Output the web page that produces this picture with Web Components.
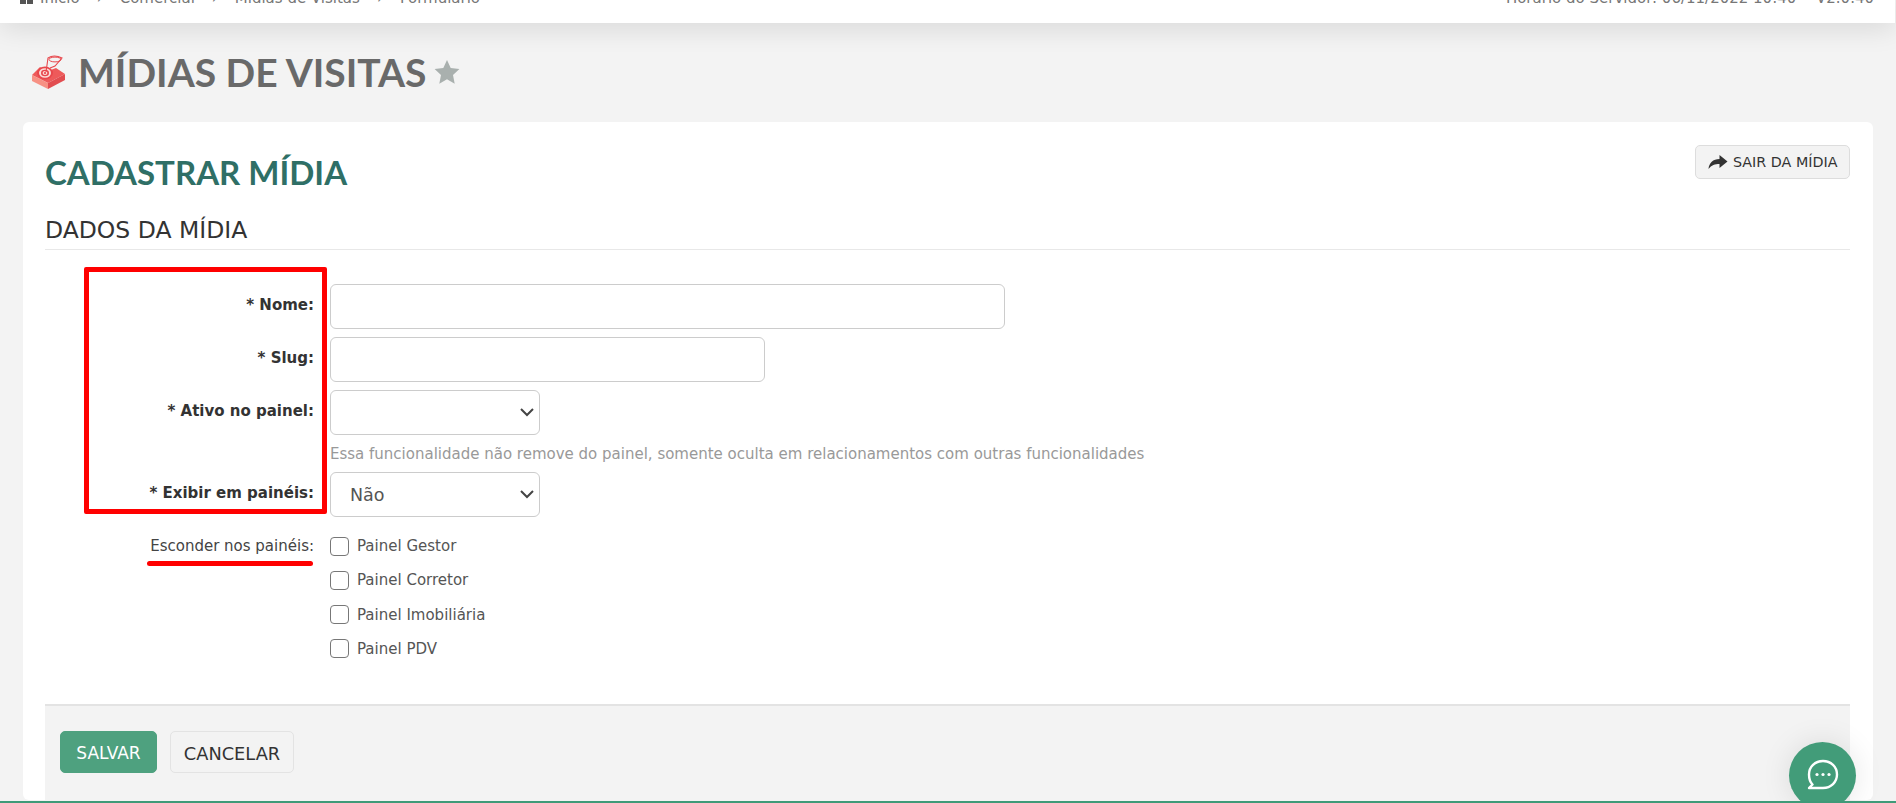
<!DOCTYPE html>
<html lang="pt-BR">
<head>
<meta charset="utf-8">
<title>Mídias de visitas</title>
<style>
  html, body { margin: 0; height: 100%; overflow: hidden; }
  body { background: #f3f3f3; font-family: "DejaVu Sans", sans-serif; }
</style>
</head>
<body>
<app-shell>
  <top-bar></top-bar>
  <page-title>MÍDIAS DE VISITAS</page-title>
  <form-card>
    <form-row label="* Nome:" strong><text-box width="675"></text-box></form-row>
    <form-row label="* Slug:" strong><text-box width="435"></text-box></form-row>
    <form-row label="* Ativo no painel:" strong hint="Essa funcionalidade não remove do painel, somente oculta em relacionamentos com outras funcionalidades"><select-box></select-box></form-row>
    <form-row label="* Exibir em painéis:" strong><select-box value="Não"></select-box></form-row>
    <form-row label="Esconder nos painéis:" plain>
      <check-list></check-list>
    </form-row>
  </form-card>
  <chat-button></chat-button>
</app-shell>

<script>
// componentes da tela de cadastro de mídia

class AppShell extends HTMLElement {
  constructor() {
    super();
    this.attachShadow({ mode: 'open' });
    this.shadowRoot.innerHTML = `
      <style>
        :host { display: flex; flex-direction: column; position: relative; height: 803px; overflow: hidden; }
        .linha { position: absolute; left: 0; right: 0; bottom: 0; height: 2px; background: #3f9a78; z-index: 5; }
      </style>
      <slot></slot>
      <div class="linha"></div>
    `;
  }
}

class TopBar extends HTMLElement {
  constructor() {
    super();
    this.attachShadow({ mode: 'open' });
    this.shadowRoot.innerHTML = `
      <style>
        :host {
          display: flex; flex: none; height: 23px; width: 1895px; background: #fff; overflow: hidden;
          justify-content: space-between; align-items: flex-end; padding: 0 21px 17px 20px; box-sizing: border-box;
          font: 15px/16px "DejaVu Sans", sans-serif; color: #777; position: relative; z-index: 2;
          box-shadow: 0 4px 28px rgba(0,0,0,.13);
        }
        .migalhas { display: flex; align-items: center; gap: 17px; }
        .migalhas svg { display: block; }
        .inicio { display: flex; align-items: center; gap: 7px; }
      </style>
      <div class="migalhas">
        <span class="inicio"><svg width="13" height="13" viewBox="0 0 13 13" fill="#555"><rect x="0" y="1" width="6" height="5"/><rect x="7" y="1" width="6" height="5"/><rect x="0" y="7" width="6" height="5"/><rect x="7" y="7" width="6" height="5"/></svg>Início</span>
        <span>›</span><span>Comercial</span><span>›</span><span>Mídias de Visitas</span><span>›</span><span>Formulário</span>
      </div>
      <div>Horário do Servidor: 06/11/2022 10:40 &nbsp;- V2.0.40</div>
    `;
  }
}

class PageTitle extends HTMLElement {
  constructor() {
    super();
    this.attachShadow({ mode: 'open' });
    this.shadowRoot.innerHTML = `
      <style>
        :host {
          display: flex; flex: none; align-items: center; height: 99px; box-sizing: border-box;
          padding: 0 0 2px 32px; gap: 12px;
          font: 700 39px/48px Lato, sans-serif; color: #696969;
        }
        .estrela { margin-left: -4px; }
        svg { display: block; }
      </style>
      <svg width="34" height="34" viewBox="0 0 34 34">
        <path d="M0 20 L8 12 L16 16 L24 13 L33 19 L16 28 Z" fill="#ee5a5a"/>
        <path d="M0 20 L16 28 V34 L0 26 Z" fill="#f79184"/>
        <path d="M16 28 L33 19 V25 L16 34 Z" fill="#e24d50"/>
        <ellipse cx="13" cy="18" rx="8" ry="6.500" fill="#e8474c"/>
        <ellipse cx="13" cy="18" rx="6" ry="4.800" fill="#fbdcd8"/>
        <ellipse cx="13" cy="18" rx="4" ry="3.200" fill="#e8474c"/>
        <ellipse cx="13" cy="18" rx="2.400" ry="1.900" fill="#fbdcd8"/>
        <circle cx="13" cy="18" r="1.100" fill="#e8474c"/>
        <path d="M14 17 L16 3 Q22 -1 30 3 L23 11 L18 13" fill="none" stroke="#e8474c" stroke-width="1.100"/>
        <ellipse cx="23" cy="4.500" rx="6" ry="2.400" fill="none" stroke="#e8474c" stroke-width="1"/>
      </svg>
      <span><slot></slot></span>
      <svg class="estrela" width="26" height="26" viewBox="0 0 26 26"><path d="M13 1 L16.7 9 L25.4 10 L19 16 L20.7 24.7 L13 20.3 L5.3 24.7 L7 16 L.6 10 L9.3 9 Z" fill="#a9b0ae"/></svg>
    `;
  }
}

class FormCard extends HTMLElement {
  constructor() {
    super();
    this.attachShadow({ mode: 'open' });
    this.shadowRoot.innerHTML = `
      <style>
        :host {
          display: block; position: relative; flex: none; width: 1850px; height: 678px; margin-left: 23px;
          background: #fff; border-radius: 6px; box-sizing: border-box; padding: 0 23px 0 22px;
        }
        header { display: flex; justify-content: space-between; align-items: flex-start; height: 84px; }
        h1 { margin: 30px 0 0; font: 700 33px/40px Lato, sans-serif; color: #2f6f66; }
        .sair {
          display: flex; align-items: center; gap: 5px; width: 155px; height: 34px; margin: 23px 0 0; padding: 0 0 0 12px;
          box-sizing: border-box; background: #f3f3f3; border: 1px solid #ddd; border-radius: 5px;
          font: 14.300px "DejaVu Sans", sans-serif; color: #333; white-space: nowrap;
        }
        h2 {
          margin: 0; height: 44px; box-sizing: border-box; border-bottom: 1px solid #e8e8e8;
          font: 400 23.500px/49px "DejaVu Sans", sans-serif; color: #333;
        }
        .linhas { display: flex; flex-direction: column; gap: 8px; padding-top: 34px; height: 454px; box-sizing: border-box; }
        footer {
          display: flex; gap: 13px; height: 96px; box-sizing: border-box; border-top: 2px solid #e3e3e3;
          background: #f3f3f3; padding: 25px 0 0 15px;
        }
        button {
          height: 42px; box-sizing: border-box; border-radius: 5px; padding: 2px 0 0; cursor: pointer;
          font: 17px "DejaVu Sans", sans-serif;
        }
        .salvar { width: 97px; background: #4ea17f; border: 1px solid #4ea17f; color: #fff; }
        .cancelar { width: 124px; background: #f3f3f3; border: 1px solid #e3e3e3; color: #333; font-size: 17.800px; }
        .marca { position: absolute; left: 61px; top: 145px; width: 243px; height: 247px; box-sizing: border-box; border: 5px solid #f00; border-radius: 2px; pointer-events: none; }
        .traco { position: absolute; left: 124px; top: 439px; width: 166px; height: 5px; background: #f00; border-radius: 3px; }
      </style>
      <header>
        <h1>CADASTRAR MÍDIA</h1>
        <div class="sair">
          <svg width="20" height="16" viewBox="0 0 20 16"><path d="M11.5 1 L19.5 7.5 L11.5 14 V10 C7 10 3.5 11 .5 15 C1 9 5 5 11.5 5 Z" fill="#333"/></svg>
          SAIR DA MÍDIA
        </div>
      </header>
      <h2>DADOS DA MÍDIA</h2>
      <div class="linhas"><slot></slot></div>
      <footer>
        <button class="salvar">SALVAR</button>
        <button class="cancelar">CANCELAR</button>
      </footer>
      <div class="marca"></div>
      <div class="traco"></div>
    `;
  }
}

class FormRow extends HTMLElement {
  constructor() {
    super();
    this.attachShadow({ mode: 'open' });
  }
  connectedCallback() {
    const forte = this.hasAttribute('strong');
    const hint = this.getAttribute('hint');
    this.shadowRoot.innerHTML = `
      <style>
        :host { display: grid; grid-template-columns: 285px auto; font: 15px/20px "DejaVu Sans", sans-serif; color: #333; }
        label { text-align: right; padding: 11px 16px 0 0; font-weight: ${forte ? 700 : 400}; color: ${forte ? '#333' : '#444'}; white-space: nowrap; }
        .hint { line-height: 20px; color: #999; margin-top: 9px; white-space: nowrap; }
      </style>
      <label>${this.getAttribute('label')}</label>
      <div><slot></slot>${hint ? `<div class="hint">${hint}</div>` : ''}</div>
    `;
  }
}

class TextBox extends HTMLElement {
  constructor() {
    super();
    this.attachShadow({ mode: 'open' });
  }
  connectedCallback() {
    this.shadowRoot.innerHTML = `
      <style>
        :host { display: block; }
        input { display: block; width: ${this.getAttribute('width')}px; height: 45px; box-sizing: border-box; padding: 0; border: 1px solid #ccc; border-radius: 6px; background: #fff; outline: none; }
      </style>
      <input type="text">
    `;
  }
}

class SelectBox extends HTMLElement {
  constructor() {
    super();
    this.attachShadow({ mode: 'open' });
  }
  connectedCallback() {
    this.shadowRoot.innerHTML = `
      <style>
        :host {
          display: flex; align-items: center; justify-content: space-between; width: 210px; height: 45px;
          box-sizing: border-box; border: 1px solid #ccc; border-radius: 6px; background: #fff;
          padding: 0 4px 0 19px; font: 17.500px "DejaVu Sans", sans-serif; color: #555;
        }
        svg { display: block; margin-top: -1px; }
      </style>
      <span>${this.getAttribute('value') || ''}</span>
      <svg width="16" height="10" viewBox="0 0 16 10"><path d="M2 2 L8 8 L14 2" fill="none" stroke="#444" stroke-width="2"/></svg>
    `;
  }
}

class CheckList extends HTMLElement {
  constructor() {
    super();
    this.attachShadow({ mode: 'open' });
    const nomes = ['Painel Gestor', 'Painel Corretor', 'Painel Imobiliária', 'Painel PDV'];
    this.shadowRoot.innerHTML = `
      <style>
        :host { display: flex; flex-direction: column; gap: 14.300px; margin: 11px 0 0; font: 15px/20px "DejaVu Sans", sans-serif; color: #555; }
        div { display: flex; align-items: center; gap: 8px; height: 20px; }
        i { display: block; width: 19px; height: 19px; box-sizing: border-box; border: 1.5px solid #777; border-radius: 4px; background: #fff; }
      </style>
      ${nomes.map(n => `<div><i></i><span>${n}</span></div>`).join('')}
    `;
  }
}

class ChatButton extends HTMLElement {
  constructor() {
    super();
    this.attachShadow({ mode: 'open' });
    this.shadowRoot.innerHTML = `
      <style>
        :host {
          position: absolute; left: 1789px; top: 742px; width: 67px; height: 67px; border-radius: 50%;
          background: #429c79; display: flex; align-items: center; justify-content: center;
          box-shadow: 0 0 30px rgba(0,0,0,.1); z-index: 3;
        }
        svg { display: block; margin-top: -1px; }
      </style>
      <svg width="34" height="34" viewBox="0 0 34 34">
        <path d="M17 3 C25 3 31 9 31 16.5 C31 24 25 30 17 30 H3 L6.5 26.5 C4 24 3 20.500 3 16.500 C3 9 9 3 17 3 Z" fill="none" stroke="#fff" stroke-width="2.4" stroke-linejoin="round"/>
        <circle cx="11" cy="16.500" r="1.600" fill="#fff"/><circle cx="17" cy="16.500" r="1.600" fill="#fff"/><circle cx="23" cy="16.500" r="1.600" fill="#fff"/>
      </svg>
    `;
  }
}

customElements.define('app-shell', AppShell);
customElements.define('top-bar', TopBar);
customElements.define('page-title', PageTitle);
customElements.define('form-card', FormCard);
customElements.define('form-row', FormRow);
customElements.define('text-box', TextBox);
customElements.define('select-box', SelectBox);
customElements.define('check-list', CheckList);
customElements.define('chat-button', ChatButton);
</script>
</body>
</html>
